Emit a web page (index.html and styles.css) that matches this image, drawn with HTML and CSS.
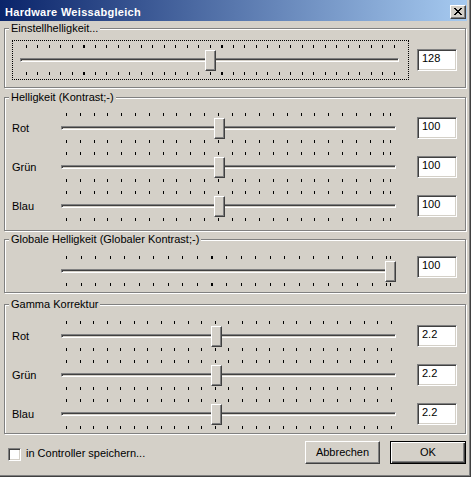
FILE: index.html
```html
<!DOCTYPE html>
<html lang="de">
<head>
    <meta charset="UTF-8">
    <title>Hardware Weissabgleich</title>
    <link rel="stylesheet" href="styles.css">
</head>
<body>
    <div class="window">
        <div class="titlebar">
            <span class="title">Hardware Weissabgleich</span>
            <div class="close">
                <svg width="8" height="7" viewBox="0 0 8 7" shape-rendering="crispEdges"><path d="M0 0h2v1h1v1h2V1h1V0h2v1h-1v1h-1v1h-1v1h1v1h1v1h1v1H6V6H5V5H3v1H2v1H0V6h1V5h1V4h1V3H2V2H1V1H0z" fill="#000"/></svg>
            </div>
        </div>

        <div class="client">
            <!-- Einstellhelligkeit -->
            <div class="group g-adjust">
                <span class="legend">Einstellhelligkeit...</span>
                <div class="row">
                    <div class="focus">
                        <div class="slider s-wide t-adjust">
                            <div class="ticks"></div>
                            <div class="channel"></div>
                            <div class="ticks"></div>
                            <div class="thumb" style="left: 185px"></div>
                        </div>
                    </div>
                    <div class="edit edit-adjust">128</div>
                </div>
            </div>

            <!-- Helligkeit -->
            <div class="group g-color">
                <span class="legend">Helligkeit (Kontrast;-)</span>
                <div class="row">
                    <span class="label">Rot</span>
                    <div class="slider t-color t-end">
                        <div class="ticks"></div>
                        <div class="channel"></div>
                        <div class="ticks"></div>
                        <div class="thumb" style="left: 153px"></div>
                    </div>
                    <div class="edit">100</div>
                </div>
                <div class="row">
                    <span class="label">Grün</span>
                    <div class="slider t-color t-end">
                        <div class="ticks"></div>
                        <div class="channel"></div>
                        <div class="ticks"></div>
                        <div class="thumb" style="left: 153px"></div>
                    </div>
                    <div class="edit">100</div>
                </div>
                <div class="row">
                    <span class="label">Blau</span>
                    <div class="slider t-color t-end">
                        <div class="ticks"></div>
                        <div class="channel"></div>
                        <div class="ticks"></div>
                        <div class="thumb" style="left: 153px"></div>
                    </div>
                    <div class="edit">100</div>
                </div>
            </div>

            <!-- Globale Helligkeit -->
            <div class="group g-global">
                <span class="legend">Globale Helligkeit (Globaler Kontrast;-)</span>
                <div class="row">
                    <span class="label"></span>
                    <div class="slider t-global t-end">
                        <div class="ticks"></div>
                        <div class="channel"></div>
                        <div class="ticks"></div>
                        <div class="thumb" style="left: 324px"></div>
                    </div>
                    <div class="edit edit-top">100</div>
                </div>
            </div>

            <!-- Gamma -->
            <div class="group g-gamma">
                <span class="legend">Gamma Korrektur</span>
                <div class="row">
                    <span class="label">Rot</span>
                    <div class="slider t-gamma">
                        <div class="ticks"></div>
                        <div class="channel"></div>
                        <div class="ticks"></div>
                        <div class="thumb" style="left: 150px"></div>
                    </div>
                    <div class="edit">2.2</div>
                </div>
                <div class="row">
                    <span class="label">Grün</span>
                    <div class="slider t-gamma">
                        <div class="ticks"></div>
                        <div class="channel"></div>
                        <div class="ticks"></div>
                        <div class="thumb" style="left: 150px"></div>
                    </div>
                    <div class="edit">2.2</div>
                </div>
                <div class="row">
                    <span class="label">Blau</span>
                    <div class="slider t-gamma">
                        <div class="ticks"></div>
                        <div class="channel"></div>
                        <div class="ticks"></div>
                        <div class="thumb" style="left: 150px"></div>
                    </div>
                    <div class="edit">2.2</div>
                </div>
            </div>

            <div class="footer">
                <span class="checkbox"></span>
                <span class="check-label">in Controller speichern...</span>
                <div class="button btn-cancel">Abbrechen</div>
                <div class="button btn-ok">OK</div>
            </div>
        </div>
    </div>
</body>
</html>
```

FILE: styles.css
```css
* {
    margin: 0;
    padding: 0;
    box-sizing: border-box;
}

body {
    width: 471px;
    height: 477px;
    overflow: hidden;
    background: #d4d0c8;
    font-family: "Liberation Sans", Arial, sans-serif;
    font-size: 11px;
    color: #000;
}

.window {
    width: 471px;
    height: 477px;
    padding: 0 3px 3px 0;
    border-right: 1px solid #404040;
    border-bottom: 1px solid #404040;
    box-shadow: inset -1px -1px 0 #808080;
}

/* title bar */
.titlebar {
    height: 21px;
    display: flex;
    align-items: flex-start;
    background: linear-gradient(to right, #0a246a, #a6caf0);
    padding-left: 5px;
}

.title {
    color: #fff;
    font-weight: bold;
    letter-spacing: 0.3px;
    line-height: 13px;
    padding-top: 6px;
}

.close {
    margin: 5px 1px 0 auto;
    width: 16px;
    height: 14px;
    background: #d4d0c8;
    border-top: 1px solid #fff;
    border-left: 1px solid #fff;
    border-right: 1px solid #404040;
    border-bottom: 1px solid #404040;
    box-shadow: inset -1px -1px 0 #808080;
    display: flex;
    align-items: center;
    justify-content: center;
}

.close svg {
    display: block;
    margin: 0 0 1px 0;
}

/* client area */
.client {
    padding-left: 4px;
}

.group {
    position: relative;
    width: 462px;
    border: 1px solid #808080;
    box-shadow: inset 1px 1px 0 #fff, 1px 1px 0 #fff;
    padding-left: 7px;
}

.legend {
    position: absolute;
    left: 4px;
    top: -7px;
    padding: 0 2px;
    line-height: 13px;
    background: #d4d0c8;
}

.g-adjust {
    margin-top: 7px;
    height: 60px;
    padding-top: 11px;
}

.g-color {
    margin-top: 9px;
    height: 134px;
    padding-top: 15px;
}

.g-global {
    margin-top: 8px;
    height: 54px;
    padding-top: 16px;
}

.g-gamma {
    margin-top: 11px;
    height: 130px;
    padding-top: 16px;
}

.row {
    display: flex;
    align-items: center;
}

.row + .row {
    margin-top: 9px;
}

.label {
    width: 49px;
    line-height: 13px;
}

.focus {
    width: 397px;
    height: 40px;
    border: 1px dotted #000;
    padding: 4px 0 0 7px;
}

/* trackbar */
.slider {
    position: relative;
    width: 335px;
    height: 30px;
}

.slider.s-wide {
    width: 379px;
}

.ticks {
    position: relative;
    height: 3px;
}

.ticks::before {
    content: "";
    position: absolute;
    top: 0;
    bottom: 0;
    left: var(--first, 5px);
    width: calc(var(--step) * var(--n) + 1px);
    background: repeating-linear-gradient(to right, #000 0 1px, transparent 1px var(--step));
}

.t-end .ticks::after {
    content: "";
    position: absolute;
    top: 0;
    right: 5px;
    width: 1px;
    height: 3px;
    background: #000;
}

.t-adjust { --first: 6px; --step: 11.5px; --n: 32; }
.t-color { --step: 13.8px; --n: 23; }
.t-global { --step: 14.55px; --n: 22; }
.t-gamma { --step: 13.54px; --n: 24; }

.channel {
    margin: 10px 0;
    height: 4px;
    background: #d4d0c8;
    border-top: 1px solid #808080;
    border-left: 1px solid #808080;
    border-right: 1px solid #fff;
    border-bottom: 1px solid #fff;
    box-shadow: inset 1px 1px 0 #404040;
}

.thumb {
    position: absolute;
    top: 5px;
    width: 11px;
    height: 21px;
    background: #d4d0c8;
    border-top: 1px solid #fff;
    border-left: 1px solid #fff;
    border-right: 1px solid #404040;
    border-bottom: 1px solid #404040;
    box-shadow: inset -1px -1px 0 #808080;
}

/* edit boxes */
.edit {
    margin-left: 21px;
    width: 40px;
    height: 22px;
    background: #fff;
    border-top: 1px solid #808080;
    border-left: 1px solid #808080;
    border-right: 1px solid #fff;
    border-bottom: 1px solid #fff;
    box-shadow: inset 1px 1px 0 #404040, inset -1px -1px 0 #d4d0c8;
    padding-left: 4px;
    line-height: 16px;
}

.edit-adjust {
    margin-left: 8px;
}

.edit-top {
    align-self: flex-start;
}

/* bottom row */
.footer {
    display: flex;
    align-items: flex-start;
    margin-top: 7px;
    padding-left: 4px;
}

.checkbox {
    margin-top: 7px;
    width: 13px;
    height: 13px;
    background: #fff;
    border-top: 1px solid #808080;
    border-left: 1px solid #808080;
    border-right: 1px solid #fff;
    border-bottom: 1px solid #fff;
    box-shadow: inset 1px 1px 0 #404040, inset -1px -1px 0 #d4d0c8;
}

.check-label {
    margin: 6px 0 0 5px;
    line-height: 13px;
}

.button {
    width: 75px;
    height: 23px;
    text-align: center;
    line-height: 21px;
    background: #d4d0c8;
}

.btn-cancel {
    margin-left: auto;
    border-top: 1px solid #fff;
    border-left: 1px solid #fff;
    border-right: 1px solid #404040;
    border-bottom: 1px solid #404040;
    box-shadow: inset -1px -1px 0 #808080;
}

.btn-ok {
    width: 76px;
    margin: 0 1px 0 10px;
    border: 1px solid #000;
    box-shadow: inset 1px 1px 0 #fff, inset -1px -1px 0 #404040, inset -2px -2px 0 #808080;
}
```
